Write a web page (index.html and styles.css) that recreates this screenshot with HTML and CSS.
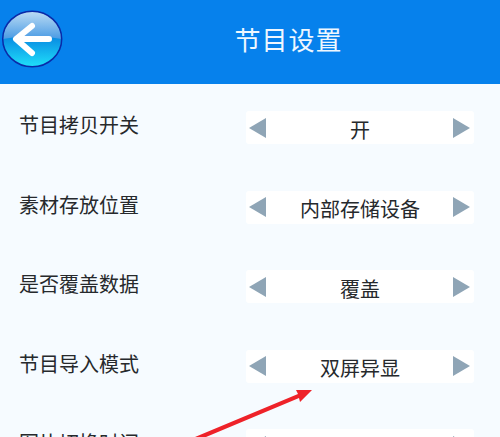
FILE: index.html
```html
<!DOCTYPE html>
<html lang="zh">
<head>
<meta charset="utf-8">
<title>节目设置</title>
<link rel="stylesheet" href="styles.css">
</head>
<body>
<div class="page">
  <header class="header">
    <svg class="back" viewBox="0 0 64 84" width="64" height="84" aria-hidden="true">
      <defs>
        <linearGradient id="top" x1="0" y1="0" x2="0" y2="1">
          <stop offset="0" stop-color="#bcdcf4"/>
          <stop offset="1" stop-color="#4a9be4"/>
        </linearGradient>
        <linearGradient id="bottom" x1="0" y1="0" x2="0" y2="1">
          <stop offset="0" stop-color="#0458bc"/>
          <stop offset="0.5" stop-color="#0a90e4"/>
          <stop offset="1" stop-color="#20e0fa"/>
        </linearGradient>
      </defs>
      <ellipse cx="32.200" cy="39" rx="29.500" ry="27.800" fill="url(#bottom)"/>
      <path d="M3 39 A29.200 27.500 0 0 1 61.400 39 Q32 33 3 39Z" fill="url(#top)"/>
      <ellipse cx="32.200" cy="39" rx="29.500" ry="27.800" fill="none" stroke="#0a2aa8" stroke-width="1.500"/>
      <path d="M32 26 L16 39 L32 53 M17 39 H49" fill="none" stroke="#fff" stroke-width="6" stroke-linecap="round" stroke-linejoin="round"/>
    </svg>
    <h1 class="title">节目设置</h1>
  </header>
  <main class="list">
    <div class="row">
      <span class="label">节目拷贝开关</span>
      <div class="picker"><i class="tri left"></i><span class="value">开</span><i class="tri right"></i></div>
    </div>
    <div class="row">
      <span class="label">素材存放位置</span>
      <div class="picker"><i class="tri left"></i><span class="value">内部存储设备</span><i class="tri right"></i></div>
    </div>
    <div class="row">
      <span class="label">是否覆盖数据</span>
      <div class="picker"><i class="tri left"></i><span class="value">覆盖</span><i class="tri right"></i></div>
    </div>
    <div class="row">
      <span class="label">节目导入模式</span>
      <div class="picker"><i class="tri left"></i><span class="value">双屏异显</span><i class="tri right"></i></div>
    </div>
    <div class="row">
      <span class="label">图片切换时间</span>
      <div class="picker"><i class="tri left"></i><span class="value"></span><i class="tri right"></i></div>
    </div>
  </main>
  <svg class="pointer" viewBox="0 0 500 437" width="500" height="437" aria-hidden="true">
    <path d="M195 437 L298 394 L296 390 L312 390 L300 402 L299 398 L206 437Z" fill="#ee2229"/>
  </svg>
</div>
</body>
</html>
```
FILE: styles.css
```css
html, body {
  margin: 0;
  padding: 0;
}
body {
  width: 500px;
  height: 437px;
  overflow: hidden;
  background: #f6fbff;
  font-family: "Liberation Sans", "Noto Sans CJK SC", sans-serif;
}
.page {
  position: relative;
  width: 500px;
  height: 437px;
  overflow: hidden;
}
.header {
  height: 84px;
  background: #0681ec;
  display: flex;
  align-items: center;
  justify-content: center;
  position: relative;
}
.back {
  position: absolute;
  left: 0;
  top: 0;
}
.title {
  margin: -7px 0 0 77px;
  font-size: 26px;
  font-weight: 400;
  color: #eef7ff;
  letter-spacing: 1px;
}
.list {
  padding: 27px 26px 0 19px;
  display: flex;
  flex-direction: column;
  gap: 46.500px;
}
.row {
  display: flex;
  justify-content: space-between;
  align-items: flex-start;
  height: 33px;
}
.label {
  font-size: 20px;
  line-height: 26px;
  padding-top: 2px;
  color: #26292c;
}
.picker {
  width: 228px;
  height: 33px;
  box-sizing: border-box;
  padding: 0 4px 0 3px;
  background: #fff;
  border-radius: 3px;
  display: flex;
  align-items: center;
  justify-content: space-between;
}
.value {
  font-size: 20px;
  line-height: 20px;
  padding-top: 6px;
  margin-left: 1px;
  color: #26292c;
}
.tri {
  width: 0;
  height: 0;
  border-top: 10px solid transparent;
  border-bottom: 10px solid transparent;
}
.left {
  border-right: 17px solid #8fa5b6;
}
.right {
  border-left: 17px solid #8fa5b6;
}
.pointer {
  position: absolute;
  left: 0;
  top: 0;
}
```
